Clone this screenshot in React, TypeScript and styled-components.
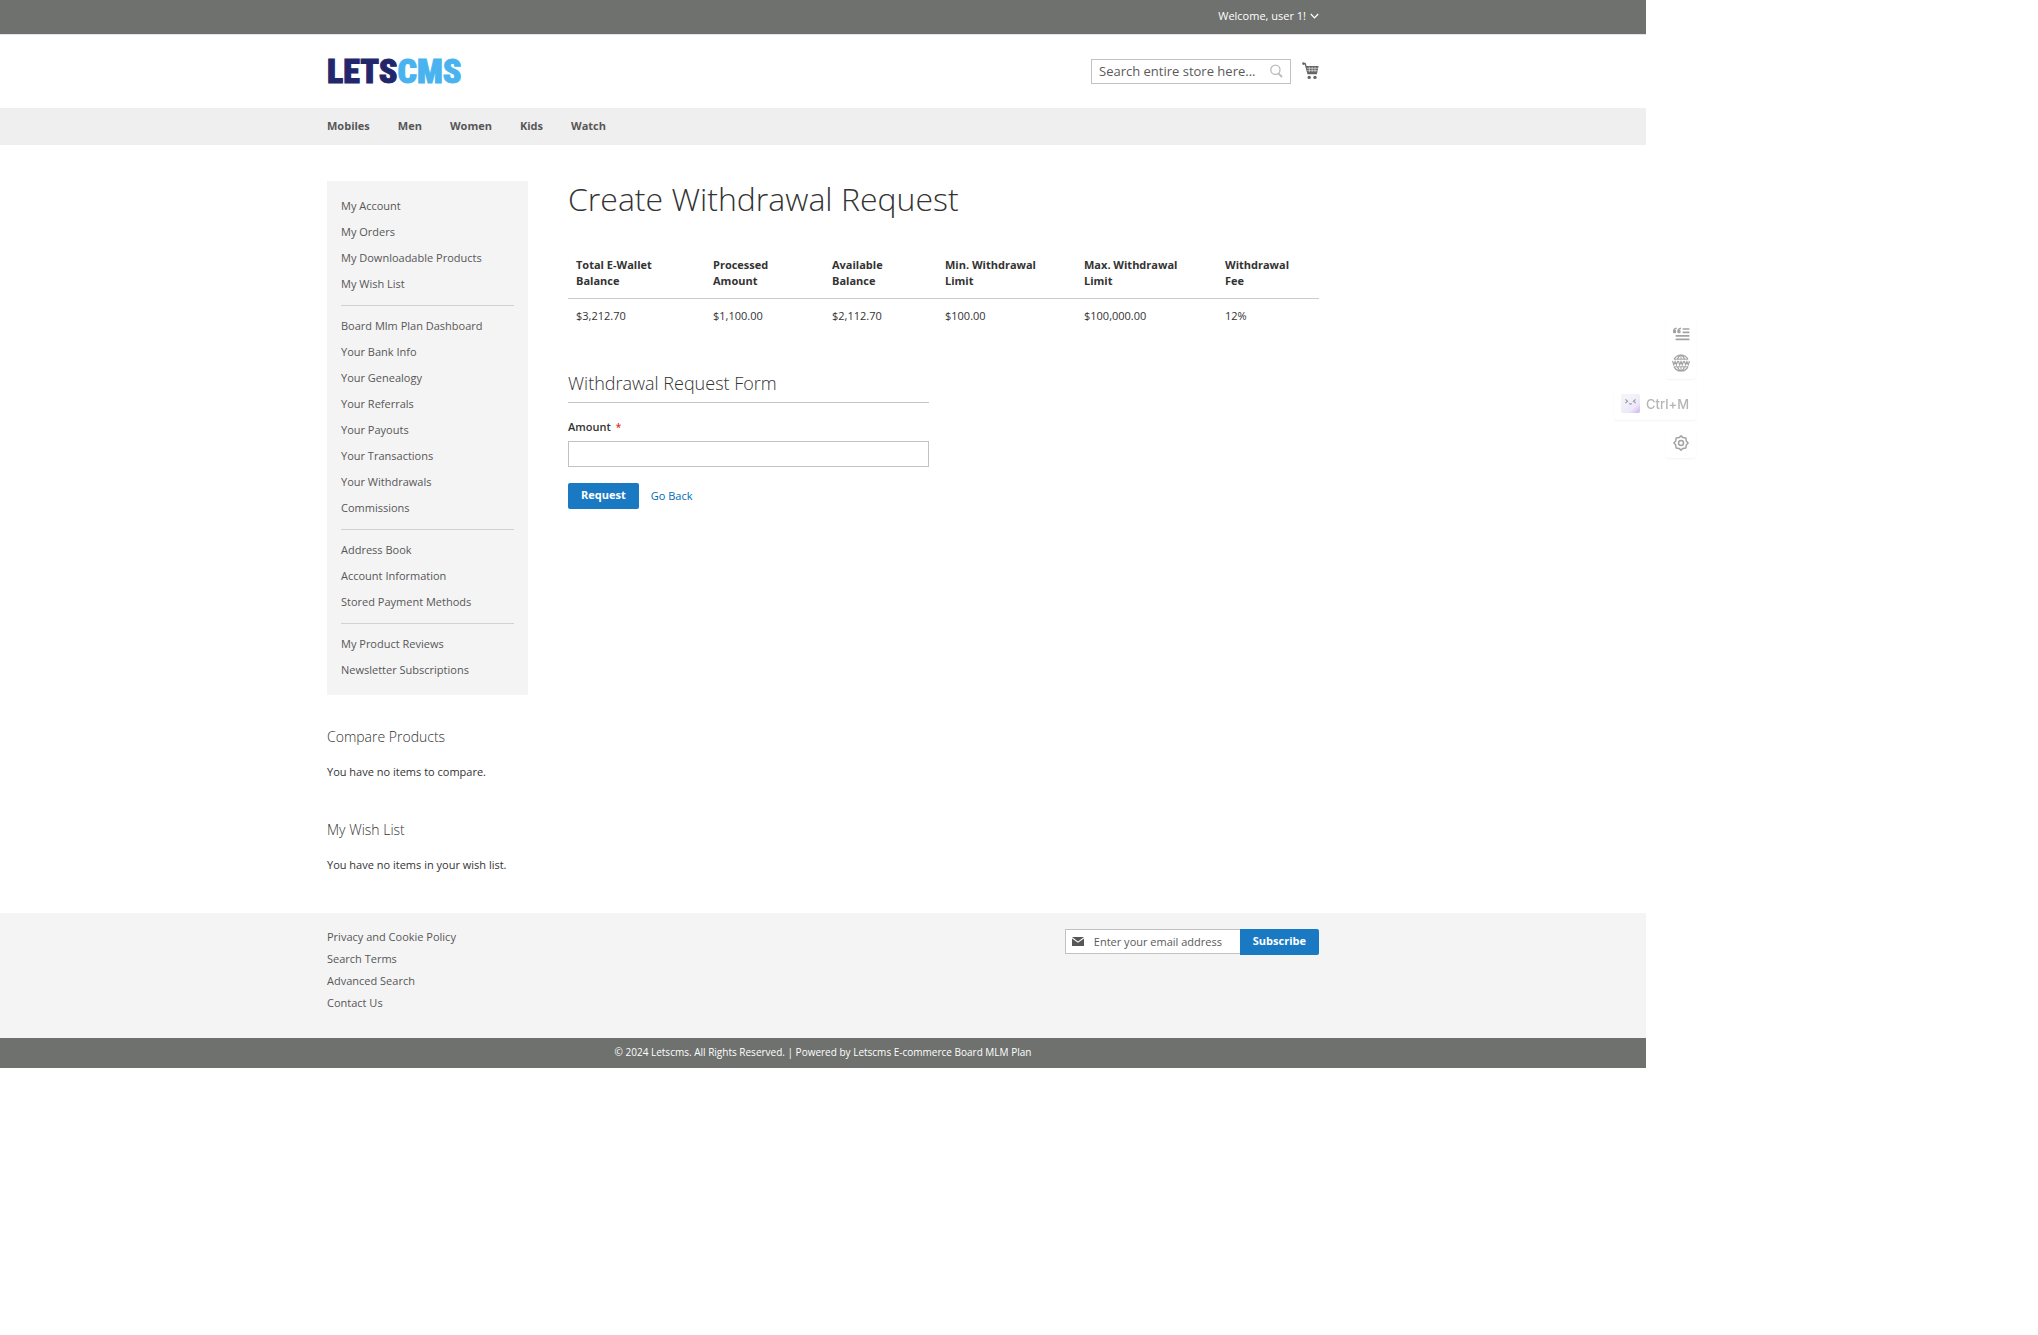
import React from "react";
import styled, { createGlobalStyle } from "styled-components";

const Global = createGlobalStyle`
  *, *::before, *::after { box-sizing: border-box; }
  body {
    margin: 0;
    background: #fff;
    color: #333;
    font-family: "Open Sans", "Noto Sans", sans-serif;
    font-size: 11px;
    line-height: 16px;
  }
  a { color: inherit; text-decoration: none; }
  ul { list-style: none; margin: 0; padding: 0; }
  h1, h2, h3, p { margin: 0; }
`;

const Shell = styled.div`
  margin-right: 392px;
`;

const Container = styled.div`
  max-width: 1024px;
  margin: 0 auto;
  padding: 0 16px;
`;

const Panel = styled.div`
  background: #6e716e;
  color: #fff;
  border-bottom: 1px solid #e4e4e4;
`;

const PanelRow = styled(Container)`
  display: flex;
  justify-content: flex-end;
  padding-top: 8px;
  padding-bottom: 10px;
`;

const AccountButton = styled.button`
  display: flex;
  align-items: center;
  gap: 4px;
  border: 0;
  padding: 0;
  background: none;
  color: inherit;
  font: inherit;
`;

const HeaderRow = styled(Container)`
  display: flex;
  align-items: center;
  justify-content: space-between;
  padding-top: 18px;
  padding-bottom: 19px;
`;

const Logo = styled.a`
  color: #22276c;
  font-family: Impact, "Roboto Condensed", "DejaVu Sans Condensed", sans-serif;
  font-size: 34px;
  font-weight: 900;
  line-height: 36px;
  -webkit-text-stroke: 1px currentColor;
`;

const LogoAccent = styled.span`
  color: #49b3f0;
`;

const HeaderTools = styled.div`
  display: flex;
  align-items: center;
  gap: 11px;
`;

const SearchBox = styled.form`
  display: flex;
  align-items: center;
  width: 200px;
  height: 25px;
  padding: 0 7px;
  border: 1px solid #c2c2c2;
  background: #fff;
`;

const BareInput = styled.input<{ $size: number }>`
  flex: 1;
  min-width: 0;
  border: 0;
  padding: 0;
  outline: 0;
  background: transparent;
  color: #333;
  font: inherit;
  font-size: ${(p) => p.$size}px;
  &::placeholder { color: #5a5a5a; opacity: 1; }
`;

const IconButton = styled.button`
  display: flex;
  border: 0;
  padding: 0;
  background: none;
`;

const NavBar = styled.nav`
  padding-bottom: 1px;
  background: #efefef;
`;

const NavList = styled.ul`
  display: flex;
  gap: 28px;
  color: #575757;
  font-weight: 700;
  line-height: 36px;
`;

const Columns = styled(Container)`
  display: grid;
  grid-template-columns: 201px minmax(0, 1fr);
  column-gap: 40px;
  align-items: start;
  padding-top: 36px;
  padding-bottom: 40px;
`;

const AccountNav = styled.nav`
  padding: 12px 14px;
  background: #f4f4f4;
  color: #575757;
`;

const NavGroup = styled.ul`
  & + & {
    margin-top: 8px;
    padding-top: 7px;
    border-top: 1px solid #d1d1d1;
  }
`;

const NavItem = styled.li`
  line-height: 26px;
`;

const Block = styled.section<{ $gap: number }>`
  margin-top: ${(p) => p.$gap}px;
`;

const BlockTitle = styled.h3`
  margin-bottom: 18px;
  color: #333;
  font-size: 14px;
  font-weight: 300;
  line-height: 18px;
`;

const PageTitle = styled.h1`
  margin-bottom: 40px;
  font-size: 32px;
  font-weight: 300;
  line-height: 36px;
`;

const Table = styled.table`
  width: 100%;
  border-collapse: collapse;
  table-layout: fixed;
  text-align: left;
`;

const Col = styled.col<{ $w: number }>`
  width: ${(p) => p.$w}px;
`;

const Th = styled.th`
  padding: 0 20px 9px 8px;
  border-bottom: 1px solid #ccc;
  vertical-align: bottom;
  font-weight: 700;
`;

const Td = styled.td`
  padding: 9px 8px;
`;

const RequestForm = styled.form`
  width: 361px;
  max-width: 100%;
  margin-top: 39px;
`;

const FormTitle = styled.h2`
  padding-bottom: 8px;
  border-bottom: 1px solid #c5c5c5;
  font-size: 18px;
  font-weight: 300;
  line-height: 22px;
`;

const FieldLabel = styled.label`
  display: block;
  margin: 16px 0 6px;
  font-weight: 600;
`;

const Required = styled.span`
  margin-left: 5px;
  color: #e02b27;
  font-size: 10px;
`;

const AmountInput = styled.input`
  display: block;
  width: 100%;
  height: 26px;
  padding: 0 7px;
  border: 1px solid #c2c2c2;
  font: inherit;
`;

const Actions = styled.div`
  display: flex;
  align-items: center;
  gap: 12px;
  margin-top: 16px;
`;

const PrimaryButton = styled.button<{ $radius: string }>`
  height: 26px;
  padding: 0 13px 2px;
  border: 0;
  border-radius: ${(p) => p.$radius};
  background: #1979c3;
  color: #fff;
  font: inherit;
  font-weight: 700;
`;

const TextLink = styled.a`
  color: #006bb4;
`;

const Footer = styled.footer`
  background: #f4f4f4;
`;

const FooterRow = styled(Container)`
  display: flex;
  justify-content: space-between;
  align-items: flex-start;
  padding-top: 16px;
  padding-bottom: 24px;
`;

const FooterLinks = styled.ul`
  display: grid;
  gap: 6px;
  color: #575757;
  padding-bottom: 3px;
`;

const Newsletter = styled.form`
  display: flex;
  align-items: flex-start;
`;

const EmailBox = styled.label`
  display: flex;
  align-items: center;
  gap: 10px;
  width: 175px;
  height: 25px;
  padding-left: 6px;
  border: 1px solid #c2c2c2;
  border-right: 0;
  background: #fff;
`;

const Copyright = styled.small`
  display: block;
  padding: 6px 16px 8px;
  background: #6e716e;
  color: #fff;
  font-size: 10px;
  text-align: center;
`;

const FloatingTools = styled.aside`
  position: fixed;
  top: 320px;
  right: 342px;
  display: flex;
  flex-direction: column;
  align-items: flex-end;
  gap: 8px;
`;

const ToolCard = styled.div`
  display: flex;
  flex-direction: column;
  align-items: center;
  gap: 13px;
  width: 30px;
  padding: 7px 0;
  border-radius: 3px;
  background: #fff;
  box-shadow: 0 1px 2px rgba(0, 0, 0, 0.05);
`;

const ShortcutCard = styled.button`
  display: flex;
  align-items: center;
  gap: 6px;
  height: 33px;
  padding: 0 7px;
  border: 0;
  border-radius: 3px;
  background: #fff;
  box-shadow: 0 1px 2px rgba(0, 0, 0, 0.05);
  color: #b4b4b4;
  font-family: Inter, sans-serif;
  font-size: 13px;
  font-weight: 500;
`;

const Chevron = () => (
  <svg width="9" height="8" viewBox="0 0 9 8" fill="none" stroke="#fff" strokeWidth="1.3">
    <path d="M0.8 2 L4.5 5.9 L8.2 2" />
  </svg>
);

const SearchIcon = () => (
  <svg width="13" height="14" viewBox="0 0 13 14" fill="none" stroke="#bbb">
    <circle cx="5.4" cy="5.8" r="4.6" strokeWidth="1.3" />
    <path d="M8.4 9.4 L12 13" strokeWidth="1.8" />
  </svg>
);

const CartIcon = () => (
  <svg width="17" height="18" viewBox="0 0 17 18" fill="none">
    <path d="M1 1.6 H3.2 L6 11.6 H15" stroke="#666" strokeWidth="1.4" />
    <circle cx="1.5" cy="1.6" r="1.3" fill="#666" />
    <path d="M3.8 4 H16.6 L15.2 11 H5.8 Z" fill="#666" />
    <path d="M4.8 6.3 H16 M5.3 8.6 H15.6 M7.4 5 V10 M10.2 5 V10 M13 5 V10" stroke="#ddd" strokeWidth="0.7" />
    <circle cx="7.2" cy="15.4" r="1.7" fill="#666" />
    <circle cx="13" cy="15.4" r="1.7" fill="#666" />
  </svg>
);

const MailIcon = () => (
  <svg width="12" height="9" viewBox="0 0 12 9">
    <path d="M0 0 H12 L6 4.4 Z" fill="#575757" />
    <path d="M0 1.4 L6 5.8 L12 1.4 V9 H0 Z" fill="#575757" />
  </svg>
);

const QuoteIcon = () => (
  <svg width="18" height="14" viewBox="0 0 18 14" fill="none" stroke="#a3a3a3">
    <path d="M4.6 1.2 C2.6 1.4 1.6 2.6 1.6 4.6 M9 1.2 C7 1.4 6 2.6 6 4.6" strokeWidth="1.4" />
    <rect x="1" y="3.1" width="3.2" height="3.2" rx="1" fill="#a3a3a3" stroke="none" />
    <rect x="5.4" y="3.1" width="3.2" height="3.2" rx="1" fill="#a3a3a3" stroke="none" />
    <path d="M10.6 2 H17.4 M10.6 5.4 H17.4 M3.6 8.9 H17.4 M3.6 12.4 H17.4" strokeWidth="1.6" />
  </svg>
);

const GlobeIcon = () => (
  <svg width="18" height="18" viewBox="0 0 18 18" fill="none" stroke="#a3a3a3" strokeWidth="1.3">
    <path d="M2 5.4 A7.8 7.8 0 0 1 16 5.4 M2 12.6 A7.8 7.8 0 0 0 16 12.6" />
    <path d="M5.6 5.4 C6.3 3 7.4 1.4 9 1.4 S11.7 3 12.4 5.4 M5.6 12.6 C6.3 15 7.4 16.6 9 16.6 S11.7 15 12.4 12.6" />
    <path d="M9 1.4 V5.4 M9 12.6 V16.6 M2.4 5.2 H15.6 M2.4 12.8 H15.6" strokeWidth="1" />
    <path d="M0.5 7 L1.8 10.8 L3.1 7.6 L4.4 10.8 L5.7 7 M6.4 7 L7.7 10.8 L9 7.6 L10.3 10.8 L11.6 7 M12.3 7 L13.6 10.8 L14.9 7.6 L16.2 10.8 L17.5 7" strokeWidth="1.2" />
  </svg>
);

const FaceIcon = () => (
  <svg width="19" height="19" viewBox="0 0 19 19" fill="none">
    <defs>
      <linearGradient id="face" x1="0.3" y1="0.2" x2="1" y2="1">
        <stop offset="0" stopColor="#f2f4f9" />
        <stop offset="0.6" stopColor="#eee8f8" />
        <stop offset="1" stopColor="#cfb0ee" />
      </linearGradient>
    </defs>
    <rect width="19" height="19" rx="2" fill="url(#face)" />
    <path d="M4.4 5.4 L6.6 7.2 L4.4 9 M14.6 5.4 L12.4 7.2 L14.6 9 M8.4 9.4 Q9.5 10.8 10.6 9.4" stroke="#9b9ba6" strokeWidth="1.1" />
  </svg>
);

const GearIcon = () => (
  <svg width="16" height="16" viewBox="0 0 16 16" fill="none" stroke="#a3a3a3" strokeWidth="1.5" strokeLinejoin="round">
    <path d="M8 0.9 L9.9 2.6 L12.9 3 L13.3 6 L15.1 8 L13.3 10 L12.9 13 L9.9 13.4 L8 15.1 L6.1 13.4 L3.1 13 L2.7 10 L0.9 8 L2.7 6 L3.1 3 L6.1 2.6 Z" />
    <circle cx="8" cy="8" r="2.5" />
  </svg>
);

const CATEGORIES = ["Mobiles", "Men", "Women", "Kids", "Watch"];

const ACCOUNT_LINKS = [
  ["My Account", "My Orders", "My Downloadable Products", "My Wish List"],
  [
    "Board Mlm Plan Dashboard",
    "Your Bank Info",
    "Your Genealogy",
    "Your Referrals",
    "Your Payouts",
    "Your Transactions",
    "Your Withdrawals",
    "Commissions",
  ],
  ["Address Book", "Account Information", "Stored Payment Methods"],
  ["My Product Reviews", "Newsletter Subscriptions"],
];

const WALLET = [
  { label: "Total E-Wallet Balance", value: "$3,212.70", width: 137 },
  { label: "Processed Amount", value: "$1,100.00", width: 119 },
  { label: "Available Balance", value: "$2,112.70", width: 113 },
  { label: "Min. Withdrawal Limit", value: "$100.00", width: 139 },
  { label: "Max. Withdrawal Limit", value: "$100,000.00", width: 141 },
  { label: "Withdrawal Fee", value: "12%", width: 102 },
];

const FOOTER_LINKS = ["Privacy and Cookie Policy", "Search Terms", "Advanced Search", "Contact Us"];

export default function App() {
  return (
    <>
      <Global />
      <Shell>
        <header>
          <Panel>
            <PanelRow>
              <AccountButton type="button">
                Welcome, user 1! <Chevron />
              </AccountButton>
            </PanelRow>
          </Panel>
          <HeaderRow>
            <Logo href="#">
              LETS<LogoAccent>CMS</LogoAccent>
            </Logo>
            <HeaderTools>
              <SearchBox role="search">
                <BareInput $size={13} type="text" aria-label="Search" placeholder="Search entire store here..." />
                <IconButton type="submit" aria-label="Search">
                  <SearchIcon />
                </IconButton>
              </SearchBox>
              <IconButton type="button" aria-label="My Cart">
                <CartIcon />
              </IconButton>
            </HeaderTools>
          </HeaderRow>
          <NavBar>
            <Container>
              <NavList>
                {CATEGORIES.map((name) => (
                  <li key={name}>
                    <a href="#">{name}</a>
                  </li>
                ))}
              </NavList>
            </Container>
          </NavBar>
        </header>

        <Columns>
          <div>
            <AccountNav>
              {ACCOUNT_LINKS.map((group) => (
                <NavGroup key={group[0]}>
                  {group.map((name) => (
                    <NavItem key={name}>
                      <a href="#">{name}</a>
                    </NavItem>
                  ))}
                </NavGroup>
              ))}
            </AccountNav>
            <Block $gap={33}>
              <BlockTitle>Compare Products</BlockTitle>
              <p>You have no items to compare.</p>
            </Block>
            <Block $gap={41}>
              <BlockTitle>My Wish List</BlockTitle>
              <p>You have no items in your wish list.</p>
            </Block>
          </div>

          <main>
            <PageTitle>Create Withdrawal Request</PageTitle>
            <Table>
              <colgroup>
                {WALLET.map((c) => (
                  <Col key={c.label} $w={c.width} />
                ))}
              </colgroup>
              <thead>
                <tr>
                  {WALLET.map((c) => (
                    <Th key={c.label} scope="col">
                      {c.label}
                    </Th>
                  ))}
                </tr>
              </thead>
              <tbody>
                <tr>
                  {WALLET.map((c) => (
                    <Td key={c.label}>{c.value}</Td>
                  ))}
                </tr>
              </tbody>
            </Table>
            <RequestForm>
              <FormTitle>Withdrawal Request Form</FormTitle>
              <FieldLabel htmlFor="amount">
                Amount<Required>*</Required>
              </FieldLabel>
              <AmountInput id="amount" type="text" />
              <Actions>
                <PrimaryButton type="submit" $radius="2px">
                  Request
                </PrimaryButton>
                <TextLink href="#">Go Back</TextLink>
              </Actions>
            </RequestForm>
          </main>
        </Columns>

        <Footer>
          <FooterRow>
            <FooterLinks>
              {FOOTER_LINKS.map((name) => (
                <li key={name}>
                  <a href="#">{name}</a>
                </li>
              ))}
            </FooterLinks>
            <Newsletter>
              <EmailBox>
                <MailIcon />
                <BareInput $size={11} type="email" aria-label="Email address" placeholder="Enter your email address" />
              </EmailBox>
              <PrimaryButton type="submit" $radius="0 2px 2px 0">
                Subscribe
              </PrimaryButton>
            </Newsletter>
          </FooterRow>
          <Copyright>© 2024 Letscms. All Rights Reserved. | Powered by Letscms E-commerce Board MLM Plan</Copyright>
        </Footer>
      </Shell>

      <FloatingTools>
        <ToolCard>
          <IconButton type="button" aria-label="Quote">
            <QuoteIcon />
          </IconButton>
          <IconButton type="button" aria-label="Web access">
            <GlobeIcon />
          </IconButton>
        </ToolCard>
        <ShortcutCard type="button">
          <FaceIcon />
          Ctrl+M
        </ShortcutCard>
        <ToolCard>
          <IconButton type="button" aria-label="Settings">
            <GearIcon />
          </IconButton>
        </ToolCard>
      </FloatingTools>
    </>
  );
}
